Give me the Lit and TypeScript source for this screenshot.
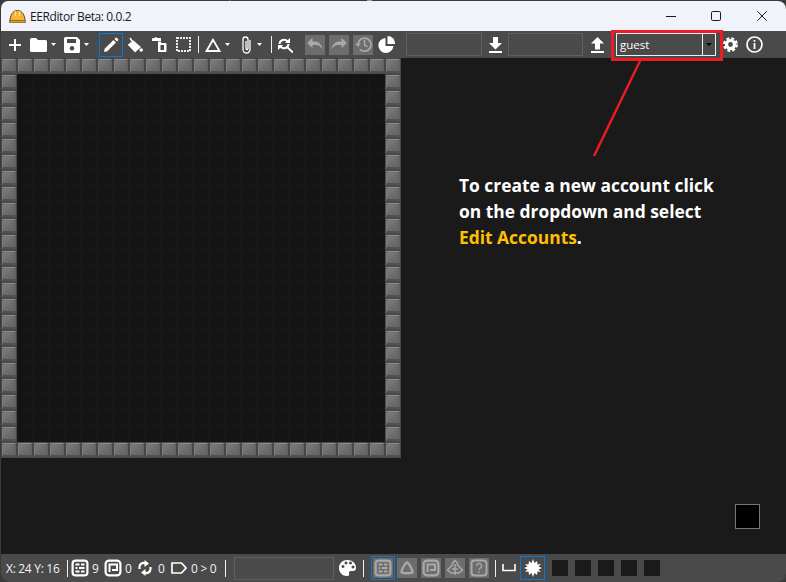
import { LitElement, html, css, svg } from "lit";
import { customElement } from "lit/decorators.js";

const W = "#fff";
const icon = (cls: string, w: number, h: number, vb: string, body: unknown) =>
  html`<svg class=${cls} width=${w} height=${h} viewBox=${vb}>${body}</svg>`;
const caret = (ml: string) => html`<span class="caret ${ml}"></span>`;

const bricks = svg`<rect x="1.600" y="1.600" width="14.800" height="14.800" rx="3" fill="none" stroke="currentColor" stroke-width="2.200"/>
  <path d="M4.500 4.500h4v2h-4zM10 4.500h3.500v2H10zM4.500 8h2v2h-2zM8 8h5.500v2H8zM4.500 11.500h4v2h-4zM10 11.500h3.500v2H10z" fill="currentColor"/>`;
const frame = svg`<rect x="1.600" y="1.600" width="14.800" height="14.800" rx="3.500" fill="none" stroke="currentColor" stroke-width="2.200"/>
  <path d="M5.500 13V5.500h7.500v5.500H8" fill="none" stroke="currentColor" stroke-width="2"/>`;

@customElement("app-root")
export class AppRoot extends LitElement {
  static styles = css`
    :host { display: block; width: 786px; height: 582px; overflow: hidden; background: linear-gradient(90deg, #3a3a3a 0 229px, #c0392b 229px 231px, #3a3a3a 231px 367px, #7fa6c9 367px 372px, #3a3a3a 372px); font-family: "Open Sans", "Noto Sans", sans-serif; position: relative; }
    .window { margin: 1px 0 0 1px; width: 785px; height: 581px; display: flex; flex-direction: column; background: #1a1a1a; border-radius: 7px 8px 8px 8px; overflow: hidden; }
    .title { height: 30px; flex: none; background: #f0f3f9; display: flex; align-items: center; color: #1a1a1a; font-size: 12px; letter-spacing: -0.4px; }
    .title .logo { margin-left: 8px; }
    .title .name { margin-left: 4px; flex: 1; }
    .title svg.ctl { flex: none; }
    .toolbar { height: 27px; flex: none; background: #4a4a4a; display: flex; align-items: center; padding-left: 8px; }
    .toolbar svg, .status svg { flex: none; display: block; color: #fff; }
    .caret { flex: none; width: 5px; height: 3px; background: #fff; clip-path: polygon(0 0, 100% 0, 50% 100%); }
    .sep { flex: none; width: 1px; height: 17px; background: #f0f0f0; }
    .sel { flex: none; box-sizing: border-box; border: 1px solid #0a78d7; display: flex; align-items: center; justify-content: center; }
    .sel.t { width: 24px; height: 24px; }
    .sel.s { width: 24px; height: 24px; }
    .sel.l { width: 25px; height: 24px; }
    .dis { flex: none; background: #6d6d6d; display: flex; align-items: center; justify-content: center; }
    .dis svg { color: #a9a9a9; }
    .dis.b { width: 20px; height: 20px; }
    .field { flex: none; box-sizing: border-box; height: 23px; background: #4a4a4a; border: 1px solid #5f5f5f; }
    .f76 { width: 76px; }
    .f75 { width: 75px; }
    .f100 { width: 100px; height: 23px; }
    .combo { flex: none; box-sizing: border-box; width: 100px; height: 23px; border: 1px solid #f0f0f0; display: flex; align-items: center; color: #fff; font-size: 11.500px; padding-left: 3px; }
    .combo .v { flex: 1; }
    .combo .arrow { width: 12px; height: 21px; border-left: 1px solid #f0f0f0; display: flex; align-items: center; justify-content: center; }
    .combo .arrow i { width: 0; height: 0; border-left: 3px solid transparent; border-right: 3px solid transparent; border-top: 3px solid #000; }
    .main { flex: 1; display: flex; min-height: 0; }
    .map { flex: none; width: 400px; height: 400px; display: grid; grid-template-columns: repeat(25, 16px); grid-template-rows: repeat(25, 16px); background: #4a4a4a; }
    .cell { background: #141414; box-shadow: inset 0 0 0 1px #171717; }
    .tile { background: #484848; padding: 1px; box-sizing: border-box; }
    .tile i { display: block; width: 14px; height: 14px; box-sizing: border-box; border-top: 1px solid #8c8c8c; border-bottom: 2px solid #505050; border-left: 1px solid #7c7c7c; border-right: 1px solid #606060; background:
      linear-gradient(#555, #555) 0 0 / 1px 1px no-repeat,
      linear-gradient(#555, #555) 100% 0 / 1px 1px no-repeat,
      linear-gradient(#555, #555) 0 100% / 1px 1px no-repeat,
      linear-gradient(#555, #555) 100% 100% / 1px 1px no-repeat,
      linear-gradient(135deg, #7e7e7e, #6c6c6c 55%, #646464); }
    .side { flex: 1; display: flex; flex-direction: column; justify-content: space-between; padding: 114px 26px 25px 58px; }
    .note { margin: 0; font-size: 17.400px; line-height: 26px; font-weight: 700; color: #fff; white-space: nowrap; }
    .note b { color: #ffc000; font-weight: 700; }
    .swatch { align-self: flex-end; box-sizing: border-box; width: 25px; height: 25px; background: #000; border: 1px solid #777; }
    .status { height: 28px; flex: none; background: #4a4a4a; display: flex; align-items: center; padding-left: 5px; color: #eaf2fb; font-size: 12px; }
    .status .txt { flex: none; white-space: nowrap; letter-spacing: -0.300px; }
    .w53 { width: 53px; }
    .w6 { width: 6px; }
    .w26 { width: 26px; }
    .sq { flex: none; width: 16px; height: 16px; background: #1a1a1a; }
    .ml2 { margin-left: 2px; } .ml3 { margin-left: 3px; } .ml4 { margin-left: 4px; } .ml5 { margin-left: 5px; }
    .ml6 { margin-left: 6px; } .ml7 { margin-left: 7px; } .ml8 { margin-left: 8px; } .ml9 { margin-left: 9px; }
    .ml10 { margin-left: 10px; } .ml11 { margin-left: 11px; } .ml12 { margin-left: 12px; }
    .mlctl1 { margin-right: 35px; } .mlctl2 { margin-right: 36px; } .mlctl3 { margin-right: 19px; }
    .redbox { position: absolute; left: 611px; top: 30px; width: 112px; height: 31px; box-sizing: border-box; border: 3px solid #ed1c24; pointer-events: none; }
    .arrow-line { position: absolute; left: 590px; top: 58px; pointer-events: none; }
  `;

  private tiles() {
    const out = [];
    for (let r = 0; r < 25; r++)
      for (let c = 0; c < 25; c++) {
        const edge = r === 0 || c === 0 || r === 24 || c === 24;
        out.push(edge ? html`<div class="tile"><i></i></div>` : html`<div class="cell"></div>`);
      }
    return out;
  }

  render() {
    return html`
    <div class="window">
      <div class="title">
        ${icon("logo", 17, 14, "0 0 17 14", svg`<path d="M1 12.500C1 6 4 1.500 8.500 1.500S16 6 16 12.500z" fill="#f4b53c" stroke="#6b4a10" stroke-width="1"/><path d="M6.500 2v5M10.500 2v5" stroke="#ffd98a" stroke-width="1.200"/><path d="M.5 11.500h16v2H.5z" fill="#e39a22" stroke="#6b4a10" stroke-width=".6"/>`)}
        <span class="name">EERditor Beta: 0.0.2</span>
        ${icon("ctl mlctl1", 10, 10, "0 0 10 10", svg`<path d="M0 5.500h10" stroke="#1a1a1a" stroke-width="1"/>`)}
        ${icon("ctl mlctl2", 10, 10, "0 0 10 10", svg`<rect x=".5" y=".5" width="9" height="9" rx="1.200" fill="none" stroke="#1a1a1a"/>`)}
        ${icon("ctl mlctl3", 10, 10, "0 0 10 10", svg`<path d="M.3.3l9.400 9.400M9.700.3L.3 9.700" stroke="#1a1a1a" stroke-width="1"/>`)}
      </div>

      <div class="toolbar">
        ${icon("", 12, 12, "0 0 12 12", svg`<path d="M6 0v12M0 6h12" stroke="${W}" stroke-width="2"/>`)}
        ${icon("ml9", 17, 14, "0 0 17 14", svg`<path d="M0 1.500A1.500 1.500 0 0 1 1.500 0h4.500l2 2h7.500A1.500 1.500 0 0 1 17 3.500v9A1.500 1.500 0 0 1 15.500 14h-14A1.500 1.500 0 0 1 0 12.500z" fill="${W}"/>`)}
        ${caret("ml4")}
        ${icon("ml8", 16, 16, "0 0 16 16", svg`<path fill-rule="evenodd" d="M1.500 0H13l3 3v11.500a1.500 1.500 0 0 1-1.500 1.500h-13A1.500 1.500 0 0 1 0 14.500v-13A1.500 1.500 0 0 1 1.500 0zM3 2v4h9V2zM8 9a2.300 2.300 0 1 0 .01 0z" fill="${W}"/>`)}
        ${caret("ml4")}
        <div class="sel t ml10">
          ${icon("", 16, 16, "0 0 16 16", svg`<path d="M1 15l.7-3.300L10.500 3l2.500 2.500L4.300 14.300z" fill="${W}"/><path d="M11.500 2l1.200-1.200a.7.7 0 0 1 1 0l1.500 1.500a.7.7 0 0 1 0 1L14 4.500z" fill="${W}"/>`)}
        </div>
        ${icon("ml4", 16, 16, "0 0 16 16", svg`<path d="M7 4l7 6-6 5.500L1 8z" fill="${W}"/><path d="M3 1l4 6" stroke="${W}" stroke-width="1.500" fill="none"/><path d="M1 8l5.500-4.500" stroke="${W}" stroke-width="1" fill="none"/><circle cx="14.200" cy="13" r="1.800" fill="${W}"/>`)}
        ${icon("ml9", 15, 15, "0 0 15 15", svg`<path d="M0 1.500l5-1.500v1h4v3H0z" fill="${W}"/><path d="M6 4.500h3v1.500h4.500a1 1 0 0 1 1 1v7a1 1 0 0 1-1 1H6zM8.500 8v5h3.500V8z" fill="${W}" fill-rule="evenodd"/>`)}
        ${icon("ml9", 15, 15, "0 0 15 15", svg`<rect x="1" y="1" width="13" height="13" fill="none" stroke="#eee" stroke-width="2" stroke-dasharray="2 1"/>`)}
        <span class="sep ml7"></span>
        ${icon("ml6", 16, 14, "0 0 16 14", svg`<path d="M8 1.800L1.500 13h13z" fill="none" stroke="${W}" stroke-width="1.800"/>`)}
        ${caret("ml4")}
        ${icon("ml11", 11, 18, "0 0 11 18", svg`<path d="M9 4v9.500a3.500 3.500 0 0 1-7 0V3.500a2.500 2.500 0 0 1 5 0V12.500a1 1 0 0 1-2 0V5" fill="none" stroke="${W}" stroke-width="1.300"/>`)}
        ${caret("ml5")}
        <span class="sep ml9"></span>
        ${icon("ml6", 15, 16, "0 0 15 16", svg`<path d="M1.500 7a4.500 4.500 0 0 1 8-2.500" fill="none" stroke="${W}" stroke-width="2"/><path d="M7 6h5V1z" fill="${W}"/><path d="M10.500 7a4.500 4.500 0 0 1-8 2.500" fill="none" stroke="${W}" stroke-width="2"/><path d="M5 8H0v5z" fill="${W}"/><path d="M8.500 9.500L15 15.500" stroke="${W}" stroke-width="2"/>`)}
        <div class="dis b ml12">${icon("", 16, 13, "0 0 16 13", svg`<path d="M4 3.500h4c4 0 6.500 3 8 8.500-2-3.500-4-5-8-5H4z" fill="currentColor"/><path d="M0 5L5.500 0v10z" fill="currentColor"/>`)}</div>
        <div class="dis b ml4">${icon("", 16, 13, "0 0 16 13", svg`<path d="M12 3.500H8c-4 0-6.500 3-8 8.500 2-3.500 4-5 8-5h4z" fill="currentColor"/><path d="M16 5L10.500 0v10z" fill="currentColor"/>`)}</div>
        <div class="dis b ml4">${icon("", 17, 17, "0 0 17 17", svg`<path d="M3 8.500a6.500 6.500 0 1 1 2 4.800" fill="none" stroke="currentColor" stroke-width="1.800"/><path d="M0 7.500h6l-3 3.500z" fill="currentColor"/><path d="M9.500 4v5l3 1.500" fill="none" stroke="currentColor" stroke-width="1.500"/>`)}</div>
        ${icon("ml5", 17, 17, "0 0 17 17", svg`<path d="M7.500 2A7.500 7.500 0 1 0 15.400 10H7.500z" fill="${W}"/><path d="M9.500 0A7.500 7.500 0 0 1 17 8H9.500z" fill="${W}"/>`)}
        <div class="field f76 ml11"></div>
        ${icon("ml7", 13, 16, "0 0 13 16", svg`<path d="M4 0h5v6h4L6.500 12.500 0 6h4zM0 14h13v2H0z" fill="${W}"/>`)}
        <div class="field f75 ml6"></div>
        ${icon("ml8", 13, 16, "0 0 13 16", svg`<path d="M4 12.500h5v-6h4L6.500 0 0 6.500h4zM0 14h13v2H0z" fill="${W}"/>`)}
        <div class="combo ml12"><span class="v">guest</span><span class="arrow"><i></i></span></div>
        ${icon("ml7", 15, 15, "0 0 15 15", svg`<circle cx="7.500" cy="7.500" r="4" fill="none" stroke="${W}" stroke-width="3.200"/><circle cx="7.500" cy="7.500" r="6.200" fill="none" stroke="${W}" stroke-width="2.400" stroke-dasharray="2.900 1.970"/>`)}
        ${icon("ml8", 17, 17, "0 0 17 17", svg`<circle cx="8.500" cy="8.500" r="7.500" fill="none" stroke="${W}" stroke-width="1.700"/><path d="M7.600 7h1.800v6H7.600zM7.600 4h1.800v1.800H7.600z" fill="${W}"/>`)}
      </div>

      <div class="main">
        <div class="map">${this.tiles()}</div>
        <div class="side">
          <p class="note">To create a new account click<br>on the dropdown and select<br><b>Edit Accounts</b>.</p>
          <div class="swatch"></div>
        </div>
      </div>

      <div class="status">
        <span class="txt w53">X: 24 Y: 16</span>
        <span class="sep ml8"></span>
        ${icon("ml3", 18, 18, "0 0 18 18", bricks)}
        <span class="txt w6 ml3">9</span>
        ${icon("ml6", 18, 18, "0 0 18 18", frame)}
        <span class="txt w6 ml3">0</span>
        ${icon("ml7", 14, 16, "0 0 14 16", svg`<path d="M1.500 9V7a4 4 0 0 1 6-3.500" fill="none" stroke="${W}" stroke-width="2.200"/><path d="M6.500 0l4.500 3.500-4.500 3.500z" fill="${W}"/><path d="M12.500 7v2a4 4 0 0 1-6 3.500" fill="none" stroke="${W}" stroke-width="2.200"/><path d="M7.500 16L3 12.500 7.500 9z" fill="${W}"/>`)}
        <span class="txt w6 ml6">0</span>
        ${icon("ml7", 16, 12, "0 0 16 12", svg`<path d="M1 1h9.500L15 6l-4.500 5H1z" fill="none" stroke="${W}" stroke-width="1.700"/>`)}
        <span class="txt w26 ml4">0 &gt; 0</span>
        <span class="sep ml8"></span>
        <div class="field f100 ml8"></div>
        ${icon("ml5", 17, 16, "0 0 17 16", svg`<path fill-rule="evenodd" d="M8.500 0C3.500 0 0 3.500 0 8s3.500 8 8 8c2 0 2.500-1 2-2.500-.5-1.500.5-2.500 2-2.500h2.500C16 11 17 9.500 17 7.500 17 3 13 0 8.500 0zM4 8a1.500 1.500 0 1 1 .01 0zM7 4.500a1.500 1.500 0 1 1 .01 0zM11.500 4.500a1.500 1.500 0 1 1 .01 0zM14 8.500a1.500 1.500 0 1 1 .01 0z" fill="${W}"/>`)}
        <span class="sep ml7"></span>
        <div class="sel s ml7"><div class="dis b">${icon("", 18, 18, "0 0 18 18", bricks)}</div></div>
        <div class="dis b ml2">${icon("", 16, 16, "0 0 16 16", svg`<path d="M8 2.500c1.500 0 6 8 5.500 10-.3 1-10.700 1-11 0C2 10.500 6.500 2.500 8 2.500z" fill="none" stroke="currentColor" stroke-width="2.400"/>`)}</div>
        <div class="dis b ml4">${icon("", 18, 18, "0 0 18 18", frame)}</div>
        <div class="dis b ml4">${icon("", 18, 18, "0 0 18 18", svg`<path d="M9 1.500l2.500 2.500v2L14 8.500 16.500 11 13 14H5L1.500 11 4 8.500 6.500 6V4z" fill="none" stroke="currentColor" stroke-width="1.600"/><path d="M9 5v11M6 10h6" stroke="currentColor" stroke-width="1.500"/>`)}</div>
        <div class="dis b ml4">${icon("", 18, 18, "0 0 18 18", svg`<rect x="1.500" y="1.500" width="15" height="15" rx="3" fill="none" stroke="currentColor" stroke-width="2"/><path d="M6.500 7a2.500 2.500 0 1 1 3.500 2.300c-.7.3-1 .7-1 1.700" fill="none" stroke="currentColor" stroke-width="1.300"/><path d="M8.300 12.300h1.400v1.400H8.300z" fill="currentColor"/>`)}</div>
        <span class="sep ml6"></span>
        ${icon("ml6", 14, 8, "0 0 14 8", svg`<path d="M1 0v6.500h12V0" fill="none" stroke="${W}" stroke-width="1.600"/>`)}
        <div class="sel l ml4">
          ${icon("", 18, 18, "0 0 18 18", svg`<path d="M9 0l1.500 4 2.500-2 .5 3.500L17 5l-2.500 2.500L18 9l-3.500 1.500L17 13l-3.500-.5-.5 3.500-2.500-2L9 18l-1.500-4-2.500 2-.5-3.500L1 13l2.500-2.500L0 9l3.500-1.500L1 5l3.500.5L5 2l2.500 2z" fill="${W}"/>`)}
        </div>
        <span class="sq ml7"></span><span class="sq ml7"></span><span class="sq ml7"></span><span class="sq ml7"></span><span class="sq ml7"></span>
      </div>
    </div>
    <div class="redbox"></div>
    <svg class="arrow-line" width="60" height="100" viewBox="0 0 60 100"><path d="M50 3L4 98" stroke="#ed1c24" stroke-width="2.400"/></svg>
    `;
  }
}
